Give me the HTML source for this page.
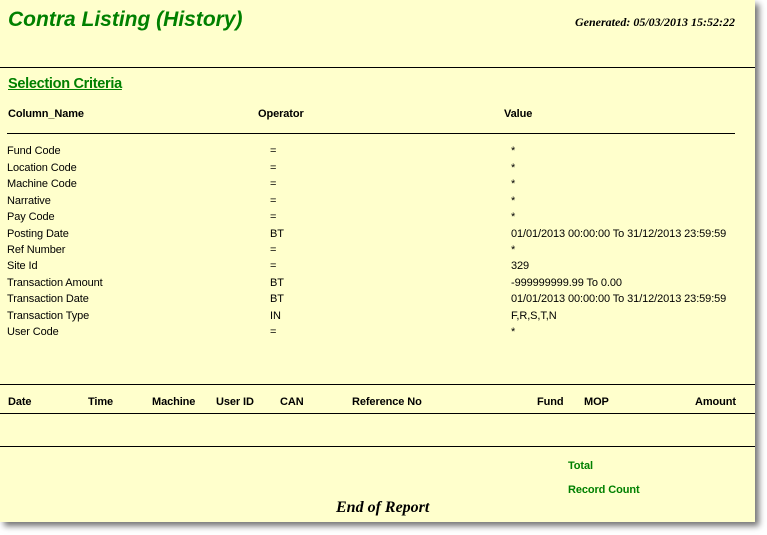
<!DOCTYPE html>
<html><head><meta charset="utf-8"><style>
body{margin:0;width:767px;height:535px;background:#fff;position:relative;overflow:hidden;font-family:"Liberation Sans",Arial,sans-serif;}
#pg{position:absolute;left:0;top:0;width:755px;height:522px;background:#ffffcc;box-shadow:4px 4px 6px rgba(0,0,0,0.55);}
.a{position:absolute;white-space:nowrap;}
.t{font-size:11px;color:#000;line-height:13px;letter-spacing:-0.1px;}
.b{font-weight:bold;}
.ln{position:absolute;height:1px;background:#000;}
.g{color:#008000;}
</style></head><body>
<div id="pg">
<div class="a g" style="left:8px;top:8px;font-size:21px;font-weight:bold;font-style:italic;line-height:24px;">Contra Listing (History)</div>
<div class="a" style="right:20px;top:15px;font-family:'Liberation Serif',serif;font-size:12px;font-weight:bold;font-style:italic;">Generated: 05/03/2013 15:52:22</div>
<div class="ln" style="left:0;top:67px;width:755px;"></div>
<div class="a g" style="left:8px;top:76px;font-size:14.5px;font-weight:bold;text-decoration:underline;letter-spacing:-0.3px;">Selection Criteria</div>
<div class="a t b" style="left:8px;top:108px;">Column_Name</div>
<div class="a t b" style="left:258px;top:108px;">Operator</div>
<div class="a t b" style="left:504px;top:108px;">Value</div>
<div class="ln" style="left:7px;top:133px;width:728px;"></div>

<div class="a t" style="left:7px;top:145px;">Fund Code</div><div class="a t" style="left:270px;top:145px;">=</div><div class="a t" style="left:511px;top:145px;">*</div>
<div class="a t" style="left:7px;top:162px;">Location Code</div><div class="a t" style="left:270px;top:162px;">=</div><div class="a t" style="left:511px;top:162px;">*</div>
<div class="a t" style="left:7px;top:178px;">Machine Code</div><div class="a t" style="left:270px;top:178px;">=</div><div class="a t" style="left:511px;top:178px;">*</div>
<div class="a t" style="left:7px;top:195px;">Narrative</div><div class="a t" style="left:270px;top:195px;">=</div><div class="a t" style="left:511px;top:195px;">*</div>
<div class="a t" style="left:7px;top:211px;">Pay Code</div><div class="a t" style="left:270px;top:211px;">=</div><div class="a t" style="left:511px;top:211px;">*</div>
<div class="a t" style="left:7px;top:228px;">Posting Date</div><div class="a t" style="left:270px;top:228px;">BT</div><div class="a t" style="left:511px;top:228px;">01/01/2013 00:00:00 To 31/12/2013 23:59:59</div>
<div class="a t" style="left:7px;top:244px;">Ref Number</div><div class="a t" style="left:270px;top:244px;">=</div><div class="a t" style="left:511px;top:244px;">*</div>
<div class="a t" style="left:7px;top:260px;">Site Id</div><div class="a t" style="left:270px;top:260px;">=</div><div class="a t" style="left:511px;top:260px;">329</div>
<div class="a t" style="left:7px;top:277px;">Transaction Amount</div><div class="a t" style="left:270px;top:277px;">BT</div><div class="a t" style="left:511px;top:277px;">-999999999.99 To 0.00</div>
<div class="a t" style="left:7px;top:293px;">Transaction Date</div><div class="a t" style="left:270px;top:293px;">BT</div><div class="a t" style="left:511px;top:293px;">01/01/2013 00:00:00 To 31/12/2013 23:59:59</div>
<div class="a t" style="left:7px;top:310px;">Transaction Type</div><div class="a t" style="left:270px;top:310px;">IN</div><div class="a t" style="left:511px;top:310px;">F,R,S,T,N</div>
<div class="a t" style="left:7px;top:326px;">User Code</div><div class="a t" style="left:270px;top:326px;">=</div><div class="a t" style="left:511px;top:326px;">*</div>

<div class="ln" style="left:0;top:384px;width:755px;"></div>
<div class="a t b" style="left:8px;top:396px;">Date</div>
<div class="a t b" style="left:88px;top:396px;">Time</div>
<div class="a t b" style="left:152px;top:396px;">Machine</div>
<div class="a t b" style="left:216px;top:396px;">User ID</div>
<div class="a t b" style="left:280px;top:396px;">CAN</div>
<div class="a t b" style="left:352px;top:396px;">Reference No</div>
<div class="a t b" style="left:537px;top:396px;">Fund</div>
<div class="a t b" style="left:584px;top:396px;">MOP</div>
<div class="a t b" style="left:695px;top:396px;">Amount</div>
<div class="ln" style="left:0;top:413px;width:755px;"></div>
<div class="ln" style="left:0;top:446px;width:755px;"></div>
<div class="a t b g" style="left:568px;top:460px;">Total</div>
<div class="a t b g" style="left:568px;top:484px;">Record Count</div>
<div class="a" style="left:336px;top:499px;font-family:'Liberation Serif',serif;font-size:16px;font-weight:bold;font-style:italic;">End of Report</div>
</div>
</body></html>
